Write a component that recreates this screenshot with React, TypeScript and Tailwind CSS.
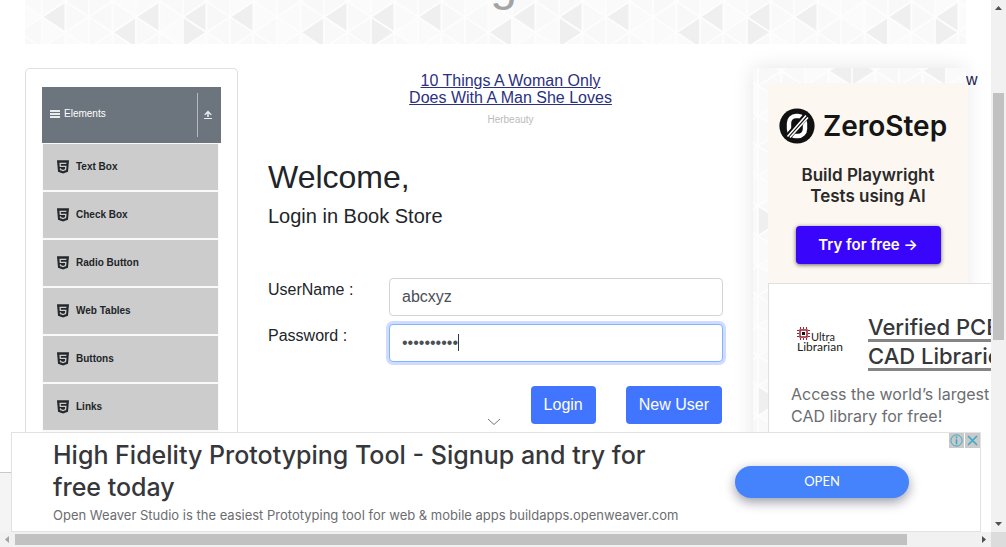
import React from "react";

const COL = 23.5;

type Shade = (c: number, r: number) => boolean;

function Triangles({ ox, oy, half, cols, rows, dark }: { ox: number; oy: number; half: number; cols: number; rows: number; dark: Shade }) {
  const shapes: React.ReactElement[] = [];
  const light = ["#f9f9f9", "#fafafa", "#f8f8f8", "#fbfbfb", "#f9f9f9"];
  for (let c = -1; c < cols; c++) {
    for (let r = -2; r < rows; r++) {
      const left = ox + c * COL;
      const right = left + COL;
      const y = oy + r * half;
      const apexLeft = (c + r) % 2 === 0;
      const points = apexLeft
        ? `${left},${y} ${right},${y - half} ${right},${y + half}`
        : `${right},${y} ${left},${y - half} ${left},${y + half}`;
      const fill = dark(c, r) ? "#efefef" : light[(c * 3 + r * 7 + 70) % 5];
      shapes.push(<polygon key={`${c},${r}`} points={points} fill={fill} stroke="#fdfdfd" strokeWidth="1.6" />);
    }
  }
  return (
    <svg className="absolute inset-0 h-full w-full" aria-hidden="true">
      {shapes}
    </svg>
  );
}

const bannerDark: Shade = (c, r) => {
  const k = ((c % 8) + 8) % 8;
  return (r === 0 && (k === 0 || k === 2 || k === 6)) || (r === 1 && (k === 0 || k === 5));
};

const panelDark: Shade = (c, r) =>
  (r === 1 && (c === 3 || c === 4 || c === 7)) || (c === 0 && (r === 11 || r === 23));

const items = ["Text Box", "Check Box", "Radio Button", "Web Tables", "Buttons", "Links"];

function Html5Icon() {
  return (
    <svg className="h-[14px] w-3" viewBox="0 0 12 14" aria-hidden="true">
      <path d="M0 0.3h12L11 11.8 6 13.6 1 11.8z" fill="#24282d" />
      <path d="M9.4 3.4H3.1l.2 3h5.5l-.3 3.2-2.5.9-2.5-.9-.1-1.2" fill="none" stroke="#cfcfcf" strokeWidth="1.3" />
    </svg>
  );
}

function Sidebar() {
  return (
    <nav className="w-[213px] shrink-0 rounded-t-[5px] border border-b-0 border-[#dfdfdf] px-4 pt-[18px]">
      <button className="flex h-14 w-[179px] items-center bg-[#6c757d] pl-2 text-[10px] text-white">
        <svg className="mr-1 h-[10px] w-[10px]" viewBox="0 0 10 10" fill="#e9ebec" aria-hidden="true">
          <path d="M0 0h10v2H0zM0 3h10v2H0zM0 6h10v2H0z" />
        </svg>
        <span className="flex-1 pb-[3px] text-left">Elements</span>
        <span className="flex h-11 w-6 items-center justify-center border-l border-[#b5babe] pr-1">
          <svg className="h-[10px] w-2" viewBox="0 0 8 10" fill="#e9ebec" aria-hidden="true">
            <path d="M4 0.6 7.8 4.6 6.8 5.2 4.8 3.5V7H3.2V3.5L1.2 5.2.2 4.6zM0 8h8v1H0z" />
          </svg>
        </span>
      </button>
      <ul className="flex w-[177px] flex-col gap-[2px] bg-[#fafafa] px-px pt-px pb-[2px]">
        {items.map((name) => (
          <li key={name}>
            <a href="#" className="flex h-[46px] items-center gap-[7px] bg-[#cccccc] pl-[14px] text-[10px] font-bold text-[#212529]">
              <Html5Icon />
              <span className="pb-[2px]">{name}</span>
            </a>
          </li>
        ))}
      </ul>
    </nav>
  );
}

function LoginForm() {
  return (
    <main className="min-w-0 flex-1">
      <section className="flex flex-col items-center pt-1 pl-[30px] text-center">
        <a href="#" className="text-base leading-[17px] text-[#2b3180] underline">
          10 Things A Woman Only
          <br />
          Does With A Man She Loves
        </a>
        <span className="mt-[6px] text-[10px] leading-[15px] text-[#bbbbbb]">Herbeauty</span>
      </section>
      <form className="mt-[31px]" onSubmit={(e) => e.preventDefault()}>
        <h2 className="text-[32px] leading-[38px]">Welcome,</h2>
        <h5 className="mt-2 text-xl leading-6">Login in Book Store</h5>
        <div className="mt-[50px] grid grid-cols-[121px_1fr] gap-y-2">
          <label htmlFor="userName">UserName :</label>
          <input
            id="userName"
            type="text"
            defaultValue="abcxyz"
            className="h-[38px] w-full rounded border border-[#ced4da] bg-white px-3 text-[#495057] outline-none"
          />
          <label htmlFor="password">Password :</label>
          <div className="relative">
            <input
              id="password"
              type="password"
              defaultValue="abcdefghij"
              className="block h-[38px] w-full rounded border border-[#80b5ff] bg-white px-3 text-[#495057] caret-transparent ring-3 ring-[#cfdcff] outline-none"
            />
            <span className="absolute top-[10px] left-[69px] h-[17px] w-px bg-[#343a40]" />
          </div>
        </div>
        <div className="mt-6 flex justify-end gap-[30px] pr-px">
          <button type="submit" className="h-[38px] rounded bg-[#4275ff] px-[13px] text-white">Login</button>
          <button type="button" className="h-[38px] rounded bg-[#4275ff] px-[13px] text-white">New User</button>
        </div>
      </form>
    </main>
  );
}

function ZeroStepAd() {
  return (
    <section className="flex h-[200px] w-[200px] flex-col items-center bg-[#fcf8f1] pt-[25px] font-['Inter',sans-serif] text-[#161616]">
      <div className="flex items-center gap-2 pr-[10px]">
        <svg className="h-9 w-9" viewBox="0 0 36 36" aria-hidden="true">
          <circle cx="18" cy="18" r="17.6" fill="#111" />
          <rect x="10" y="8" width="16" height="20" rx="7" fill="none" stroke="#fff" strokeWidth="4.4" />
          <path d="M8 30 28 7" stroke="#111" strokeWidth="6.5" />
          <path d="M8.5 28.5 27 7.5M11 29.5 29 9.5" stroke="#fff" strokeWidth="1.6" />
        </svg>
        <span className="text-[28px] leading-9 font-semibold">ZeroStep</span>
      </div>
      <p className="mt-[21px] text-center text-[17px] leading-[21px] font-semibold text-[#2a2a2a]">
        Build Playwright
        <br />
        Tests using AI
      </p>
      <button className="mt-[19px] h-[38px] w-[145px] rounded-[4px] bg-[#3a05fb] text-[15px] font-semibold text-white shadow-[0_1px_4px_rgba(0,0,0,0.6)]">
        Try for free →
      </button>
    </section>
  );
}

function LibrarianAd() {
  return (
    <section className="h-[250px] w-[300px] border border-[#e0e0e0] bg-white pt-[29px] pl-[22px] font-['Inter',sans-serif]">
      <div className="flex items-start">
        <svg className="mt-[14px] mr-[18px] ml-[6px] h-[26px] w-[53px]" viewBox="0 0 53 26" aria-hidden="true">
          <rect x="3" y="3" width="7" height="7" fill="none" stroke="#9b2335" strokeWidth="1.5" />
          <path d="M3.5 0v2M6.5 0v2M9.5 0v2M3.5 11v2M6.5 11v2M9.5 11v2M0 3.5h2M0 6.5h2M0 9.5h2M11 3.5h2M11 6.5h2M11 9.5h2" stroke="#9b2335" />
          <rect x="5" y="5" width="3" height="3" fill="#111" />
          <text x="14" y="14" fontSize="11" fontFamily="Lato, sans-serif" fill="#222">Ultra</text>
          <text x="0" y="24" fontSize="12" fontFamily="Lato, sans-serif" fill="#222">Librarian</text>
        </svg>
        <a href="#" className="text-[22px] leading-6 font-medium whitespace-nowrap text-[#36373a]">
          <span className="block border-b-3 border-[#858585] pt-[2px]">Verified PCB</span>
          <span className="block border-b-3 border-[#858585] pt-[2px]">CAD Libraries</span>
        </a>
      </div>
      <p className="mt-3 text-[16px] leading-[22px] whitespace-nowrap text-[#6b6d70]">
        Access the world’s largest
        <br />
        CAD library for free!
      </p>
    </section>
  );
}

function AnchorAd() {
  return (
    <aside className="absolute right-[10px] bottom-0 left-[11px] flex h-[100px] items-center border border-[#e2e2e2] bg-white pr-[71px] pl-[41px] font-['Inter',sans-serif]">
      <button aria-label="Collapse" className="absolute -top-[15px] left-[475px]">
        <svg className="h-2 w-[14px]" viewBox="0 0 14 8" fill="none" stroke="#777" aria-hidden="true">
          <path d="M1 1l6 5.5L13 1" />
        </svg>
      </button>
      <div className="min-w-0 pt-[2px]">
        <h3 className="text-[25px] leading-8 font-medium whitespace-nowrap text-[#36373a]">
          High Fidelity Prototyping Tool - Signup and try for
          <br />
          free today
        </h3>
        <p className="text-[13px] leading-6 whitespace-nowrap text-[#6b6d70]">
          Open Weaver Studio is the easiest Prototyping tool for web &amp; mobile apps buildapps.openweaver.com
        </p>
      </div>
      <button className="ml-auto h-8 w-[174px] shrink-0 rounded-full bg-[#4583fc] font-['Lato',sans-serif] text-[13px] text-white shadow-[0_4px_12px_rgba(0,0,40,0.4)]">OPEN</button>
      <div className="absolute top-0 right-0 flex gap-px text-[#35a9cc]">
        <svg className="h-[15px] w-[15px] bg-[#c9c9c9]" viewBox="0 0 15 15" fill="none" stroke="currentColor" aria-hidden="true">
          <circle cx="7.5" cy="7.5" r="5.6" />
          <path d="M7.5 3.5v1.7M7.5 6.2v5" strokeWidth="1.6" />
        </svg>
        <button aria-label="Close" className="bg-[#c9c9c9]">
          <svg className="h-[15px] w-[15px]" viewBox="0 0 15 15" fill="none" stroke="currentColor" strokeWidth="1.5" aria-hidden="true">
            <path d="M3 3l9 9M12 3l-9 9" />
          </svg>
        </button>
      </div>
    </aside>
  );
}

export default function App() {
  return (
    <div className="grid h-screen grid-cols-[minmax(0,1fr)_15px] grid-rows-[minmax(0,1fr)_15px] overflow-hidden bg-white font-['Liberation_Sans',Arial,sans-serif] text-base text-[#212529]">
      <div className="relative flex flex-col overflow-hidden">
        <header className="relative mx-[25px] flex h-11 shrink-0 items-end justify-center overflow-hidden">
          <Triangles ox={-30} oy={17} half={15.5} cols={44} rows={4} dark={bannerDark} />
          <h1 className="relative mb-9 text-5xl leading-[48px] text-[#a3a3a3]">Login</h1>
        </header>
        <div className="mt-6 flex min-h-0 flex-1 pl-[25px]">
          <Sidebar />
          <div className="flex min-w-0 flex-1 pl-[30px]">
            <LoginForm />
          </div>
          <div className="ml-[30px] flex w-[238px] shrink-0">
            <div className="relative w-[213px] shrink-0 bg-[#fcfcfc] pt-[15px] pl-[15px] shadow-[0_0_20px_rgba(0,0,0,0.1)]">
              <Triangles ox={5} oy={-12} half={15} cols={10} rows={30} dark={panelDark} />
              <div className="relative">
                <ZeroStepAd />
                <LibrarianAd />
              </div>
            </div>
            <a href="#" className="text-[#212550]">w</a>
          </div>
        </div>
        <footer className="h-[60px] shrink-0 border-t border-[#c8c8c8] bg-[#f4f4f4]" />
        <AnchorAd />
      </div>
      <div className="flex flex-col items-center bg-[#f1f1f1]" aria-hidden="true">
        <svg className="h-[15px] w-[15px] shrink-0" viewBox="0 0 15 15" fill="#505050">
          <path d="M4 10h7L7.5 6z" />
        </svg>
        <div className="mt-[78px] h-[247px] w-[11px] shrink-0 bg-[#c1c1c1]" />
        <svg className="mt-auto h-[15px] w-[15px] shrink-0" viewBox="0 0 15 15" fill="#505050">
          <path d="M4 5h7L7.5 9z" />
        </svg>
      </div>
      <div className="flex items-center bg-[#f1f1f1]" aria-hidden="true">
        <svg className="h-[15px] w-[15px] shrink-0" viewBox="0 0 15 15" fill="#a3a3a3">
          <path d="M9 4v7L5 7.5z" />
        </svg>
        <div className="mr-[69px] h-[11px] flex-1 bg-[#c1c1c1]" />
        <svg className="h-[15px] w-[15px] shrink-0" viewBox="0 0 15 15" fill="#505050">
          <path d="M6 4v7L10 7.5z" />
        </svg>
      </div>
      <div className="bg-[#dcdcdc]" />
    </div>
  );
}
